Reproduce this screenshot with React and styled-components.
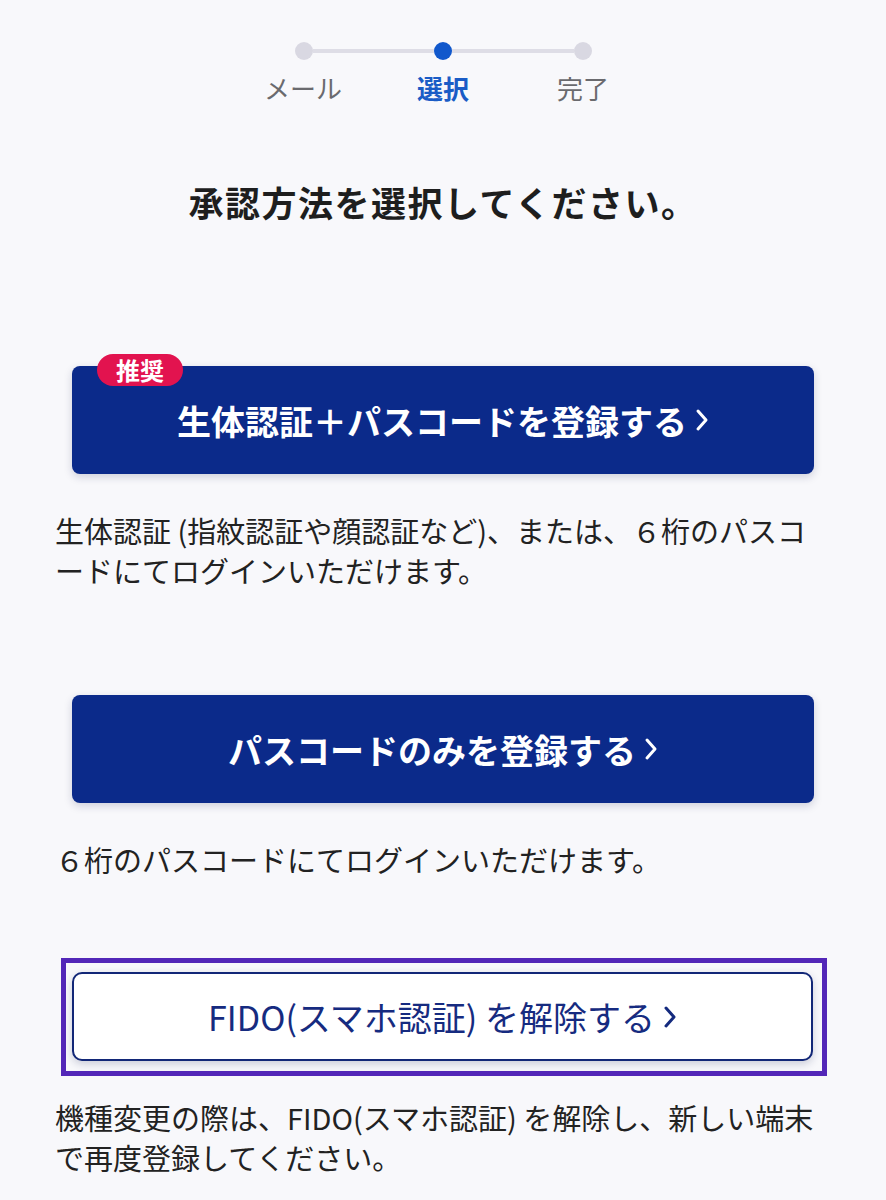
import React from 'react';
import styled, { createGlobalStyle } from 'styled-components';

const GlobalStyle = createGlobalStyle`
    html, body {
        margin: 0;
        padding: 0;
        background: #f8f8fb;
    }

    body {
        font-family: "Noto Sans CJK JP", "Noto Sans", sans-serif;
        color: #222;
    }
`;

const steps = ['メール', '選択', '完了'];
const currentStep = 1;

const Chevron = ({ color }) => (
    <svg width="14" height="24" viewBox="0 0 14 24" fill="none">
        <polyline
            points="3,3 11,12 3,21"
            stroke={color}
            strokeWidth="3"
            strokeLinecap="round"
            strokeLinejoin="round"
        />
    </svg>
);

const App = () => {
    return (
        <Page>
            <GlobalStyle />
            <Stepper>
                <StepTrack>
                    {steps.map((step, i) => (
                        <React.Fragment key={step}>
                            {i > 0 && <StepLine />}
                            <StepDot $active={i === currentStep} />
                        </React.Fragment>
                    ))}
                </StepTrack>
                <StepLabels>
                    {steps.map((step, i) => (
                        <StepLabel key={step} $active={i === currentStep}>{step}</StepLabel>
                    ))}
                </StepLabels>
            </Stepper>

            <Title>承認方法を選択してください。</Title>

            <Option $gap={141}>
                <PrimaryButton>
                    <Badge>推奨</Badge>
                    生体認証＋パスコードを登録する
                    <Chevron color="#fff" />
                </PrimaryButton>
                <Description>
                    生体認証 (指紋認証や顔認証など)、または、６桁のパスコードにてログインいただけます。
                </Description>
            </Option>

            <Option $gap={105}>
                <PrimaryButton>
                    パスコードのみを登録する
                    <Chevron color="#fff" />
                </PrimaryButton>
                <Description>６桁のパスコードにてログインいただけます。</Description>
            </Option>

            <Option $gap={79}>
                <Highlight>
                    <OutlineButton>
                        FIDO(スマホ認証) を解除する
                        <Chevron color="#142a7e" />
                    </OutlineButton>
                </Highlight>
                <Description $tight>
                    機種変更の際は、FIDO(スマホ認証) を解除し、新しい端末で再度登録してください。
                </Description>
            </Option>
        </Page>
    );
};

const Page = styled.div`
    width: 886px;
    min-height: 1200px;
    box-sizing: border-box;
    padding: 42px 55px 0 55px;
`;

const Stepper = styled.div`
    display: flex;
    flex-direction: column;
    align-items: center;
    gap: 10px;
`;

const StepTrack = styled.div`
    display: flex;
    align-items: center;
    width: 297px;
`;

const StepLine = styled.div`
    flex: 1;
    height: 4px;
    background: #dedde6;
`;

const StepDot = styled.div`
    width: 18px;
    height: 18px;
    border-radius: 50%;
    flex-shrink: 0;
    background: ${({ $active }) => ($active ? '#1158cc' : '#d9d8e2')};
`;

const StepLabels = styled.div`
    display: grid;
    grid-template-columns: repeat(3, 140px);
`;

const StepLabel = styled.div`
    text-align: center;
    font-size: 26px;
    line-height: 36px;
    font-weight: ${({ $active }) => ($active ? 700 : 400)};
    color: ${({ $active }) => ($active ? '#1a5cc6' : '#6a6a6e')};
`;

const Title = styled.h1`
    margin: 73px 0 0;
    text-align: center;
    font-size: 35px;
    letter-spacing: 1.5px;
    line-height: 46px;
    font-weight: 700;
    color: #1e1e1e;
`;

const Option = styled.section`
    margin-top: ${({ $gap }) => $gap}px;
    display: flex;
    flex-direction: column;
`;

const PrimaryButton = styled.button`
    position: relative;
    margin: 0 17px;
    height: 108px;
    border: none;
    border-radius: 8px;
    background: #0b2a8a;
    color: #fff;
    font-family: inherit;
    font-size: 34px;
    font-weight: 700;
    display: flex;
    align-items: center;
    justify-content: center;
    gap: 8px;
    box-shadow: 0 3px 8px rgba(20, 30, 80, 0.18);
    cursor: pointer;
`;

const Badge = styled.span`
    position: absolute;
    top: -12px;
    left: 25px;
    width: 86px;
    height: 32px;
    border-radius: 16px;
    background: #e2134f;
    color: #fff;
    font-size: 24px;
    font-weight: 700;
    line-height: 32px;
    text-align: center;
`;

const Highlight = styled.div`
    margin: 0 4px 0 6px;
    border: 5px solid #5327b8;
    padding: 9px 9px 10px 6px;
`;

const OutlineButton = styled.button`
    width: 100%;
    height: 89px;
    border: 2px solid #122777;
    border-radius: 10px;
    background: #fff;
    color: #162b80;
    font-family: inherit;
    font-size: 34px;
    font-weight: 400;
    display: flex;
    align-items: center;
    justify-content: center;
    gap: 8px;
    box-shadow: 0 3px 8px rgba(20, 30, 80, 0.2);
    cursor: pointer;
`;

const Description = styled.p`
    margin: ${({ $tight }) => ($tight ? '21px' : '36px')} 0 0;
    font-size: 29px;
    line-height: 40px;
    color: #222;
`;

export default App;
